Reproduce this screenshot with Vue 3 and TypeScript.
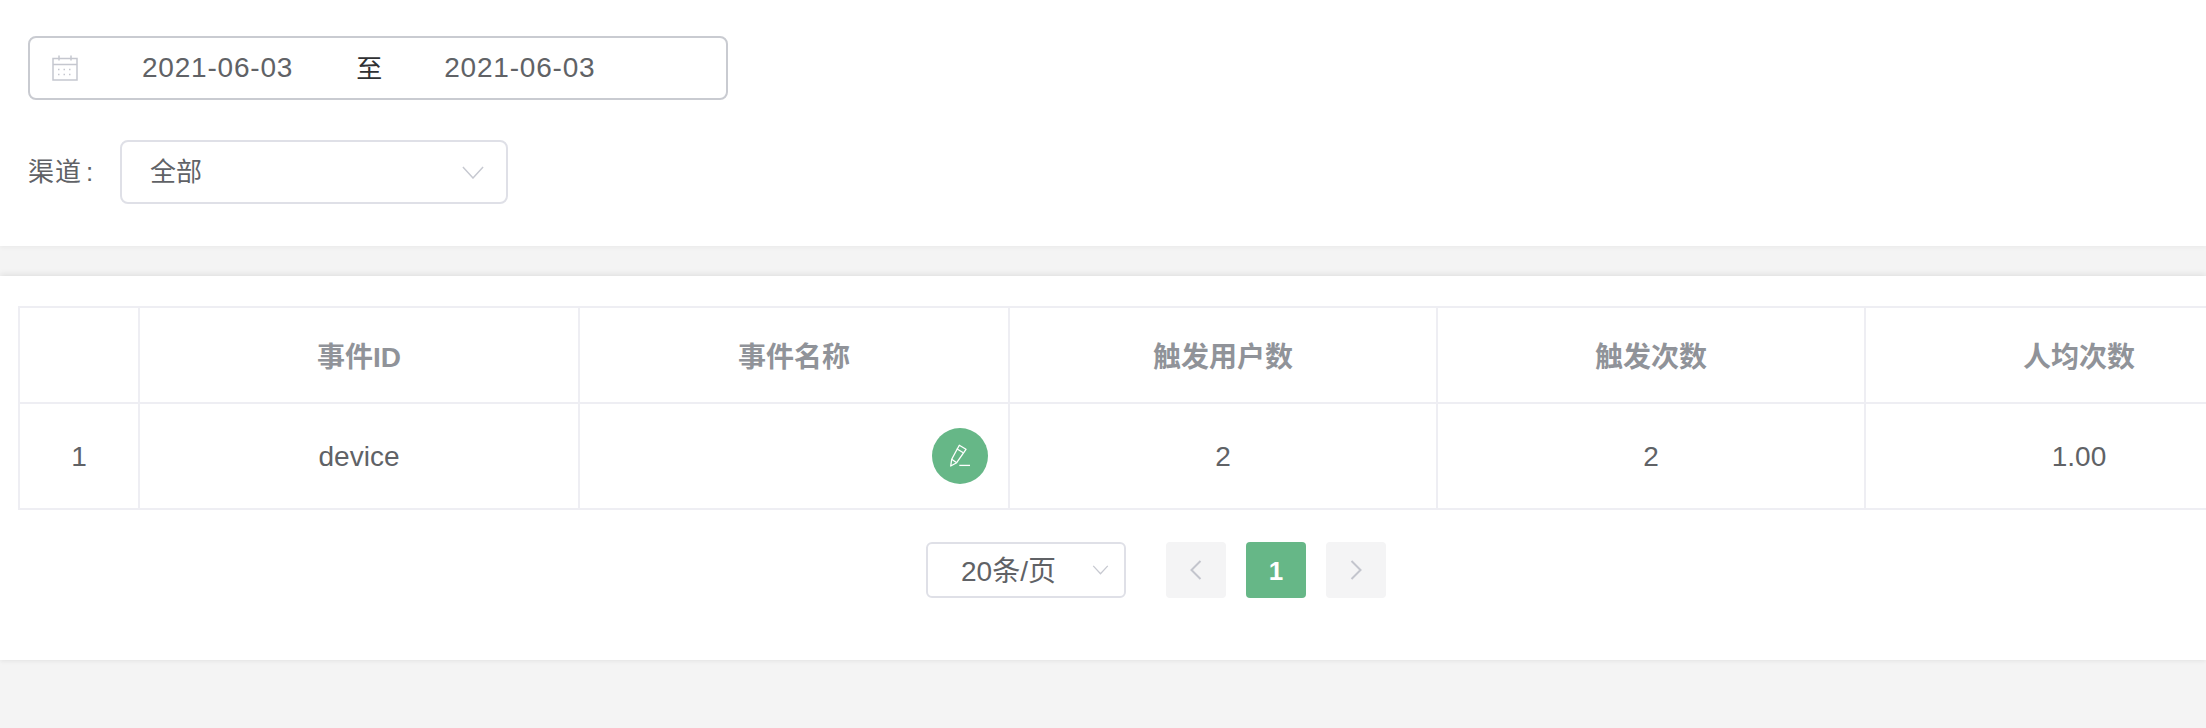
<script setup lang="ts">
const headers: string[] = ['', '事件ID', '事件名称', '触发用户数', '触发次数', '人均次数']
const widths: number[] = [120, 440, 430, 428, 428, 428]
</script>

<template>
  <div class="page">
    <section class="filters">
      <div class="range">
        <svg class="cal" viewBox="0 0 26 26" width="26" height="26" fill="none" stroke="#c5c7cf" stroke-width="1.5">
          <rect x="1" y="3.5" width="24" height="21.5" />
          <path d="M1 9.5h24M7 0.5v5M19 0.5v5" />
          <path d="M6 14.5h3M11.5 14.5h3M17 14.5h3M6 19.5h3M11.5 19.5h3M17 19.5h3" stroke-dasharray="1.5 1.5" />
        </svg>
        <span class="date first">2021-06-03</span>
        <span class="to">至</span>
        <span class="date">2021-06-03</span>
      </div>
      <div class="channel">
        <span class="label">渠道<span class="colon">:</span></span>
        <div class="select">
          <span class="value">全部</span>
          <svg class="chev" viewBox="0 0 24 14" width="22" height="13" fill="none" stroke="#c7c9d1" stroke-width="1.6"><path d="M1 1l11 12L23 1" /></svg>
        </div>
      </div>
    </section>

    <section class="panel">
      <div class="table-wrap">
        <table>
          <colgroup><col v-for="(w, i) in widths" :key="i" :style="{ width: w + 'px' }" /></colgroup>
          <thead>
            <tr><th v-for="(h, i) in headers" :key="i">{{ h }}</th></tr>
          </thead>
          <tbody>
            <tr>
              <td>1</td>
              <td>device</td>
              <td class="name">
                <button class="edit" type="button" aria-label="编辑">
                  <svg viewBox="0 0 24 26" width="24" height="26" fill="none" stroke="#fff" stroke-width="1.3" stroke-linejoin="round">
                    <path d="M11.3 2.3L18 6.3 8.7 19.7 2.7 23 3.7 16.3z" />
                    <path d="M8.7 5.7l6.6 4M3.7 16.3l5 3.4" />
                    <path d="M11.3 22.4H22" />
                  </svg>
                </button>
              </td>
              <td>2</td>
              <td>2</td>
              <td>1.00</td>
            </tr>
          </tbody>
        </table>
      </div>
      <div class="pager">
        <div class="size">
          <span class="size-text">20条/页</span>
          <svg viewBox="0 0 18 11" width="17" height="10" fill="none" stroke="#c7c9d1" stroke-width="1.4"><path d="M1 1l8 8.6L17 1" /></svg>
        </div>
        <button class="pg" type="button" aria-label="上一页">
          <svg viewBox="0 0 12 20" width="12" height="20" fill="none" stroke="#c3c5cd" stroke-width="2"><path d="M10.5 1L1.5 10l9 9" /></svg>
        </button>
        <button class="pg on" type="button"><span class="num">1</span></button>
        <button class="pg" type="button" aria-label="下一页">
          <svg viewBox="0 0 12 20" width="12" height="20" fill="none" stroke="#c3c5cd" stroke-width="2"><path d="M1.5 1l9 9-9 9" /></svg>
        </button>
      </div>
    </section>
  </div>
</template>

<style>
html, body { margin: 0; background: #f4f4f4; }
</style>

<style scoped>
.page {
  height: 728px;
  overflow: hidden;
  background: #f4f4f4;
  font-family: "Liberation Sans", "Noto Sans CJK SC", sans-serif;
  font-size: 28px;
  color: #606266;
}
.filters {
  height: 246px;
  box-sizing: border-box;
  padding: 36px 28px 0;
  background: #fff;
  box-shadow: 0 2px 4px rgba(0, 0, 0, 0.04);
}
.range {
  width: 700px;
  height: 64px;
  box-sizing: border-box;
  display: flex;
  align-items: center;
  padding-left: 22px;
  border: 2px solid #c9cbd1;
  border-radius: 8px;
}
.date { letter-spacing: 0.8px; }
.first { margin-left: 64px; }
.to { margin: 0 62px 4px 63px; color: #303133; font-size: 26px; }
.channel {
  display: flex;
  align-items: center;
  margin-top: 40px;
}
.label { width: 92px; font-size: 26px; letter-spacing: 1px; padding-bottom: 5px; }
.colon { margin-left: 4px; }
.select {
  width: 388px;
  height: 64px;
  box-sizing: border-box;
  display: flex;
  align-items: center;
  justify-content: space-between;
  padding: 0 22px 0 28px;
  border: 2px solid #dfe0e7;
  border-radius: 8px;
  font-size: 26px;
}
.value { padding-bottom: 6px; }
.panel {
  margin-top: 30px;
  height: 384px;
  padding-top: 30px;
  box-sizing: border-box;
  background: #fff;
  box-shadow: 0 -2px 6px rgba(0, 0, 0, 0.08), 0 2px 4px rgba(0, 0, 0, 0.04);
}
.table-wrap { margin-left: 18px; overflow: hidden; }
table {
  width: 2274px;
  table-layout: fixed;
  border-collapse: collapse;
  border: 2px solid #eeeef3;
}
th, td {
  border: 2px solid #eeeef3;
  padding: 0;
  text-align: center;
  font-weight: normal;
}
th {
  height: 94px;
  font-weight: bold;
  color: #909399;
}
td { height: 106px; padding-top: 1px; box-sizing: border-box; }
td.name { position: relative; padding-top: 0; }
.edit {
  position: absolute;
  top: 24px;
  right: 20px;
  width: 56px;
  height: 56px;
  padding: 0;
  border: 0;
  border-radius: 50%;
  background: #66b787;
  display: flex;
  align-items: center;
  justify-content: center;
}
.pager {
  display: flex;
  align-items: center;
  margin-top: 32px;
  padding-left: 926px;
}
.size {
  width: 200px;
  height: 56px;
  box-sizing: border-box;
  display: flex;
  align-items: center;
  justify-content: space-between;
  padding: 0 15px 0 33px;
  margin-right: 40px;
  border: 2px solid #dfe0e7;
  border-radius: 6px;
}
.size-text { padding-bottom: 3px; }
.pg {
  width: 60px;
  height: 56px;
  margin-right: 20px;
  padding: 0;
  border: 0;
  border-radius: 4px;
  background: #f4f4f5;
  display: flex;
  align-items: center;
  justify-content: center;
  font: bold 26px "Liberation Sans", sans-serif;
}
.on { background: #66b787; color: #fff; }
.num { padding-top: 2px; }
</style>
